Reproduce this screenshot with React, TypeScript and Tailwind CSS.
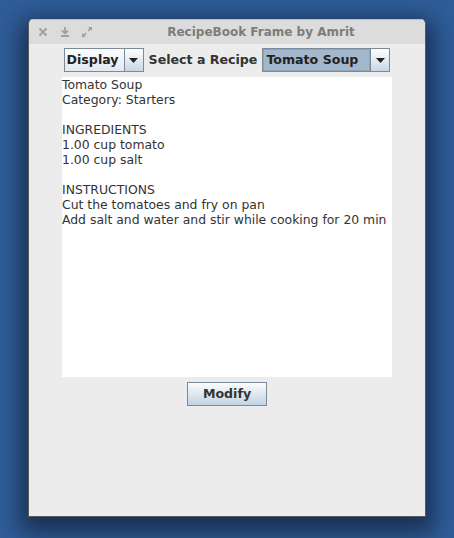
import React from 'react';

const Combo: React.FC<{ label: string; width: string; selected?: boolean }> = ({ label, width, selected }) => {
  return (
    <div className={`flex h-[24px] border border-[#7a8a99] ${width}`}>
      <div
        className={`flex-1 flex items-center pl-[2px] font-bold text-[12.6px] text-[#222] ${
          selected ? 'bg-[#a3b8cc] border border-[#8fa5ba]' : 'bg-gradient-to-b from-[#fbfcfd] to-[#e3e9f1]'
        }`}
      >
        {label}
      </div>
      <div className="w-[19px] flex items-center justify-center border-l border-[#7a8a99] bg-gradient-to-b from-[#ffffff] to-[#c8d6e6]">
        <svg width="9" height="5" viewBox="0 0 9 5">
          <path d="M0 0 H9 L4.5 5 Z" fill="#222" />
        </svg>
      </div>
    </div>
  );
};

export default function App() {
  const lines = [
    'Tomato Soup',
    'Category: Starters',
    '',
    'INGREDIENTS',
    '1.00 cup tomato',
    '1.00 cup salt',
    '',
    'INSTRUCTIONS',
    'Cut the tomatoes and fry on pan',
    'Add salt and water and stir while cooking for 20 min',
  ];

  return (
    <div
      className="w-[454px] h-[538px] bg-[#2f5d98] pt-[19px] pl-[28px]"
      style={{ fontFamily: '"DejaVu Sans", sans-serif' }}
    >
      <div className="w-[398px] h-[498px] flex flex-col bg-[#ececec] rounded-t-[5px] border border-[#5a5a5a] border-t-[#bdbdbd] shadow-[0_8px_22px_8px_rgba(10,20,40,0.6)]">
        {/* title bar */}
        <div className="h-[24px] flex items-center bg-[#dcdcdc] rounded-t-[5px] pl-[8px] pr-[10px]">
          <div className="flex items-center gap-[10px]">
            <svg width="12" height="12" viewBox="0 0 12 12">
              <path d="M2.5 2.5 L9.5 9.5 M9.5 2.5 L2.5 9.5" stroke="#a0a0a0" strokeWidth="2" />
            </svg>
            <svg width="12" height="12" viewBox="0 0 12 12">
              <path d="M6 1 V7 M3 4.5 L6 7.5 L9 4.5 M2 10 H10" stroke="#a0a0a0" strokeWidth="1.8" fill="none" />
            </svg>
            <svg width="12" height="12" viewBox="0 0 12 12">
              <path d="M1.5 10.5 L5 7 M10.5 1.5 L7 5" stroke="#a0a0a0" strokeWidth="1.6" />
              <path d="M1 7 V11 H5 Z M11 5 V1 H7 Z" fill="#a0a0a0" />
            </svg>
          </div>
          <div className="flex-1 text-center pl-[14px] font-bold text-[12px] text-[#7c7c7c]">
            RecipeBook Frame by Amrit
          </div>
        </div>

        {/* combo row */}
        <div className="flex items-center justify-center gap-[5px] mt-[4px]">
          <Combo label="Display" width="w-[80px]" />
          <span className="font-bold text-[12.6px] text-[#333]">Select a Recipe</span>
          <Combo label="Tomato Soup" width="w-[128px]" selected />
        </div>

        {/* text area */}
        <div className="mx-auto mt-[5px] w-[330px] h-[300px] bg-white text-[12.4px] leading-[15px] text-[#333]">
          {lines.map((l, i) => (
            <div key={i} className="h-[15px] whitespace-pre">
              {l}
            </div>
          ))}
        </div>

        {/* button */}
        <div className="flex justify-center mt-[5px]">
          <button className="w-[80px] h-[24px] border border-[#7a8a99] bg-gradient-to-b from-[#fbfcfd] to-[#c3d3e4] font-bold text-[12.6px] text-[#333]">
            Modify
          </button>
        </div>
      </div>
    </div>
  );
}
